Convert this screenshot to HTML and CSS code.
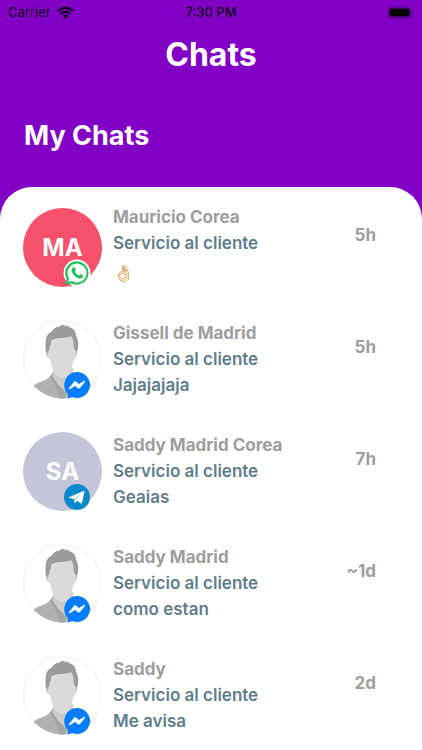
FILE: index.html
```html
<!DOCTYPE html>
<html lang="es">
<head>
<meta charset="utf-8">
<meta name="viewport" content="width=device-width, initial-scale=1">
<title>Chats</title>
<link rel="stylesheet" href="styles.css">
</head>
<body>
<svg class="defs" aria-hidden="true">
  <clipPath id="disc"><circle cx="39.500" cy="39.500" r="39"/></clipPath>
  <symbol id="person" viewBox="0 0 79 79">
    <circle cx="39.500" cy="39.500" r="39" fill="#fff" stroke="#edf0f7"/>
    <g clip-path="url(#disc)">
      <path d="M5 70Q12 63 20 61Q26 59 29 53L52 54Q56 60 66 63L75 70V79H5Z" fill="#b0b0b0"/>
      <path d="M30 50L29 54Q33 64 43 72L51 60L50 48Z" fill="#cbcbcb"/>
      <path d="M28.500 54Q32 65 43 72L41 79H37Q34 66 27 57Z" fill="#a3a3a3"/>
      <path d="M24 36Q22 30 22.500 23Q23 14 28 12Q32 7 36 6L35 8Q38 4 42 5L40 7Q44 4 46 7Q53 9 53 16Q56 21 55 28L53 37H25Z" fill="#9b9b9b"/>
      <path d="M26 29Q28 25 28 21Q31 18 37 18Q44 18 48 16Q51 20 50.500 26L52 30Q54 31 53 36Q52 40 50.500 40Q49 51 44 56Q39 61 34 56Q29 51 27.500 40Q25 39 24.500 35Q24 31 26 31Z" fill="#dadada"/>
    </g>
  </symbol>
  <symbol id="messenger" viewBox="0 0 28 28">
    <path d="M14 1A13 13 0 1 1 9 26L5 27.500V23A13 13 0 0 1 14 1Z" fill="#087cff"/>
    <path d="M6 17L11 10.800Q12 9.800 13.200 10.700L16 13L21 10Q22.600 9.800 21.700 11.200L17 17Q16 18 14.700 17L12 15L7.300 18Q5.200 18.500 6 17Z" fill="#fff"/>
  </symbol>
  <symbol id="whatsapp" viewBox="0 0 28 28">
    <circle cx="14" cy="14" r="13.500" fill="#fff"/>
    <path d="M2.300 26L3.600 19.700A11.700 11.700 0 1 1 8.500 24.400Z" fill="#25c05a"/>
    <path d="M5.300 23L6.100 19.300A9.500 9.500 0 1 1 9 22.100Z" fill="#fff"/>
    <path d="M10 8.500Q11.500 7.800 12 9L12.900 11Q13 11.500 11.900 12.800Q13.300 15.500 16 16.500L17.300 15.200Q18 15 20 16.300Q20.300 19 17.700 19.600Q15.700 20 12.500 17.700Q8.800 14.800 8.500 11.500Q8.500 9.500 10 8.500Z" fill="#25c05a"/>
  </symbol>
  <symbol id="telegram" viewBox="0 0 28 28">
    <circle cx="14" cy="14" r="13" fill="#0b87cb"/>
    <path d="M6 14.200L20.500 8Q21.700 7.800 21.400 9L19 19.800Q18.700 21 17.500 20.300L14.200 17.800L12.400 19.700Q11.700 20.300 11.500 19L10.700 16L6 15Q5.200 14.600 6 14.200Z" fill="#fff"/>
    <path d="M10.700 16L18.500 10.400L12.500 17L12 19.300Z" fill="#a9cfe5"/>
  </symbol>
</svg>

<div class="status">
  <span class="carrier">Carrier
    <svg class="wifi" viewBox="0 0 18 13" aria-hidden="true"><g fill="none" stroke="#12001c" stroke-width="2.400"><path d="M1 5Q9 -2 17 5"/><path d="M4 8Q9 3.800 14 8"/></g><path d="M6 9.900Q9 7.600 12 9.900L9 13Z" fill="#12001c"/></svg>
  </span>
  <time class="clock">7:30 PM</time>
  <svg class="battery" viewBox="0 0 27 13" aria-hidden="true"><rect x="1" y="1" width="23" height="11" rx="3" fill="none" stroke="#51017e"/><rect x="2.500" y="2.500" width="20" height="8" rx="1.500" fill="#000"/><path d="M25.500 5Q27 6.500 25.500 8Z" fill="#51017e"/></svg>
</div>

<header class="header">
  <h1 class="title">Chats</h1>
  <h2 class="subtitle">My Chats</h2>
</header>

<main class="panel">
  <ul class="chats">
    <li class="chat">
      <div class="avatar red">MA<svg class="badge" role="img" aria-label="WhatsApp"><use href="#whatsapp"/></svg></div>
      <div class="body"><h3 class="name">Mauricio Corea</h3><p class="line">Servicio al cliente</p><p class="line emoji">👌🏻</p></div>
      <time class="when">5h</time>
    </li>
    <li class="chat">
      <div class="avatar"><svg class="photo" aria-hidden="true"><use href="#person"/></svg><svg class="badge" role="img" aria-label="Messenger"><use href="#messenger"/></svg></div>
      <div class="body"><h3 class="name">Gissell de Madrid</h3><p class="line">Servicio al cliente</p><p class="line">Jajajajaja</p></div>
      <time class="when">5h</time>
    </li>
    <li class="chat">
      <div class="avatar lilac">SA<svg class="badge" role="img" aria-label="Telegram"><use href="#telegram"/></svg></div>
      <div class="body"><h3 class="name">Saddy Madrid Corea</h3><p class="line">Servicio al cliente</p><p class="line">Geaias</p></div>
      <time class="when">7h</time>
    </li>
    <li class="chat">
      <div class="avatar"><svg class="photo" aria-hidden="true"><use href="#person"/></svg><svg class="badge" role="img" aria-label="Messenger"><use href="#messenger"/></svg></div>
      <div class="body"><h3 class="name">Saddy Madrid</h3><p class="line">Servicio al cliente</p><p class="line">como estan</p></div>
      <time class="when">~1d</time>
    </li>
    <li class="chat">
      <div class="avatar"><svg class="photo" aria-hidden="true"><use href="#person"/></svg><svg class="badge" role="img" aria-label="Messenger"><use href="#messenger"/></svg></div>
      <div class="body"><h3 class="name">Saddy</h3><p class="line">Servicio al cliente</p><p class="line">Me avisa</p></div>
      <time class="when">2d</time>
    </li>
  </ul>
</main>
</body>
</html>
```
FILE: styles.css
```css
* {
  box-sizing: border-box;
  margin: 0;
  padding: 0;
}

body {
  background: #8200c5;
  font-family: Inter, "Liberation Sans", sans-serif;
}

.defs {
  position: absolute;
  width: 0;
  height: 0;
}

.status {
  display: grid;
  grid-template-columns: 1fr auto 1fr;
  align-items: center;
  height: 24px;
  padding: 0 8px;
  color: #12001c;
  font-size: 13px;
}

.carrier {
  display: flex;
  align-items: center;
  gap: 6px;
}

.wifi {
  width: 17px;
  height: 13px;
}

.clock {
  font-weight: 500;
}

.battery {
  justify-self: end;
  width: 27px;
  height: 13px;
}

.header {
  color: #fff;
  padding: 10px 24px 31px;
}

.title {
  font-size: 32px;
  line-height: 42px;
  text-align: center;
}

.subtitle {
  margin-top: 40px;
  font-size: 27px;
  line-height: 40px;
}

.panel {
  min-height: calc(100vh - 187px);
  padding-top: 4px;
  background: #fff;
  border-radius: 32px 32px 0 0;
}

.chats {
  list-style: none;
}

.chat {
  display: flex;
  align-items: center;
  gap: 11px;
  min-height: 112px;
  padding: 0 46px 0 23px;
}

.avatar {
  position: relative;
  display: flex;
  flex: none;
  align-items: center;
  justify-content: center;
  width: 79px;
  height: 79px;
  border-radius: 50%;
  color: #fff;
  font-size: 24px;
  font-weight: 700;
}

.red {
  background: #f5506c;
}

.lilac {
  background: #c5c5da;
}

.photo {
  width: 100%;
  height: 100%;
}

.badge {
  position: absolute;
  right: 11px;
  bottom: 0;
  width: 28px;
  height: 28px;
}

.body {
  flex: 1;
  min-width: 0;
  font-size: 17px;
  line-height: 26px;
}

.name {
  color: #9e9e9e;
  font-size: inherit;
  font-weight: 700;
}

.line {
  color: #607d8b;
  font-weight: 600;
}

.emoji {
  line-height: 34px;
}

.when {
  padding-bottom: 24px;
  color: #9e9e9e;
  font-size: 17px;
  font-weight: 700;
}
```
